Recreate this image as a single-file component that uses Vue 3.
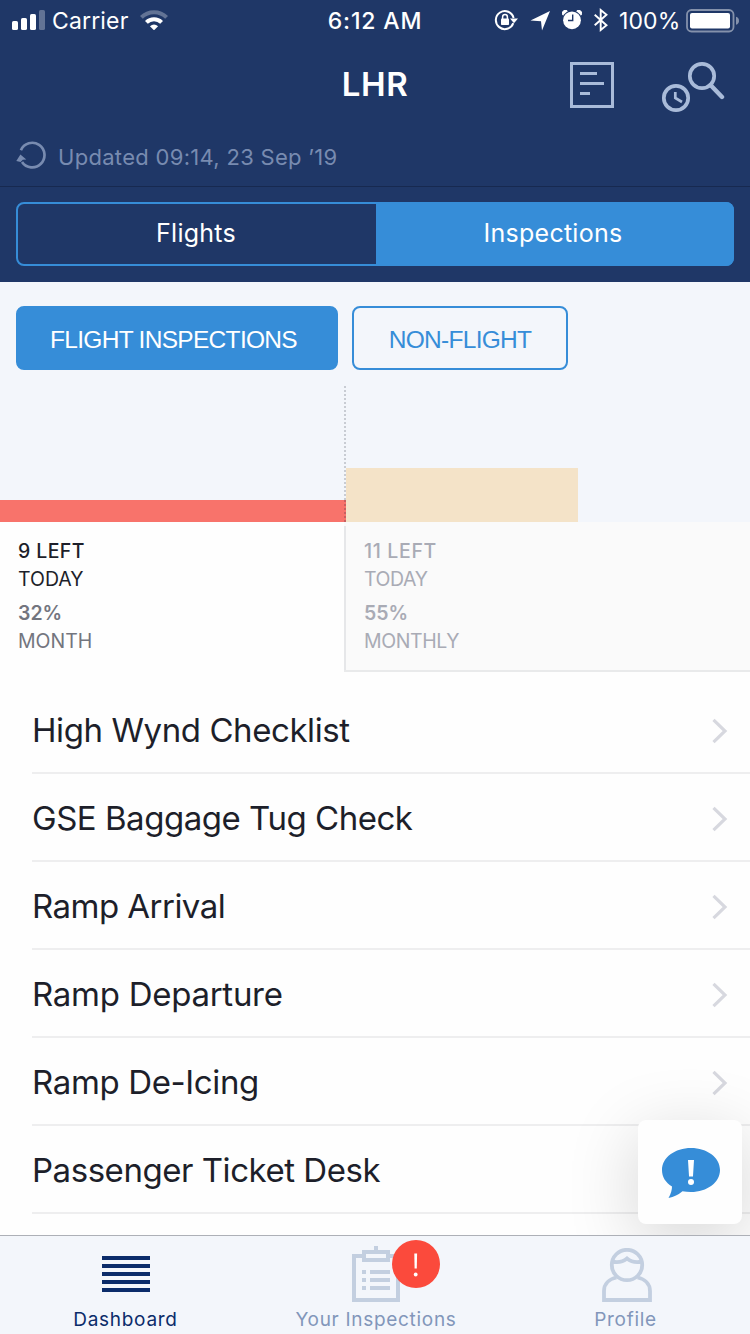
<script setup>
const checklists = [
  { name: 'High Wynd Checklist', tracking: -0.42 },
  { name: 'GSE Baggage Tug Check', tracking: -0.48 },
  { name: 'Ramp Arrival', tracking: -0.53 },
  { name: 'Ramp Departure', tracking: -0.27 },
  { name: 'Ramp De-Icing', tracking: -0.36 },
  { name: 'Passenger Ticket Desk', tracking: -0.46 },
]
</script>

<template>
  <div class="screen">
    <header class="header">
      <div class="status">
        <div class="status-left">
          <svg class="signal" width="33" height="20" viewBox="12 10 33 20" fill="#fff">
            <rect x="12" y="21" width="6" height="9" rx="1.6" />
            <rect x="21" y="18" width="6" height="12" rx="1.6" />
            <rect x="30" y="14" width="6" height="16" rx="1.6" />
            <rect x="39" y="10" width="6" height="20" rx="1.6" opacity=".3" />
          </svg>
          <span class="carrier">Carrier</span>
          <svg class="wifi" width="28" height="20" viewBox="141 10 28 20" fill="none" stroke="#fff">
            <path d="M142.4 17.4A17.8 17.8 0 0 1 167.6 17.4" stroke-width="4" opacity=".3" />
            <path d="M147.4 22.3A10.8 10.8 0 0 1 162.6 22.3" stroke-width="4" />
            <path d="M150.9 26.2Q155 22.7 159.1 26.2L155 30.3Z" fill="#fff" stroke="none" />
          </svg>
        </div>
        <span class="time">6:12 AM</span>
        <div class="status-right">
          <svg width="24" height="22" viewBox="494 9 24 22" fill="none">
            <path d="M513.3 23.2A9 9 0 1 1 513.6 18" stroke="#fff" stroke-width="2" />
            <path d="M510 18.4H518L514 23.2Z" fill="#fff" />
            <rect x="501" y="18.5" width="8" height="6.5" rx=".8" fill="#fff" />
            <path d="M502.6 19V17a2.4 2.4 0 0 1 4.8 0v2" stroke="#fff" stroke-width="1.5" />
          </svg>
          <svg class="arrow" width="20" height="20" viewBox="530 11 20 20" fill="#fff">
            <path d="M550 11L542 30.5L541 21.2L530.5 20.5Z" />
          </svg>
          <svg class="alarm" width="20" height="20" viewBox="562.5 10 20 20">
            <circle cx="572.5" cy="20.3" r="8.9" fill="#fff" />
            <path d="M563.6 15.3A3 3 0 0 1 568 11.2M577 11.2A3 3 0 0 1 581.4 15.3" fill="#fff" stroke="#fff" />
            <path d="M573.2 14.5V20.5H568.5" fill="none" stroke="#1f3767" stroke-width="1.4" />
          </svg>
          <svg class="bluetooth" width="14" height="24" viewBox="594 8 14 24" fill="none" stroke="#fff" stroke-width="1.9">
            <path d="M594.7 14.8L606.5 25.3L600.7 30V10L606.5 14.8L594.7 25.3" />
          </svg>
          <span class="percent">100%</span>
          <svg class="battery" width="53" height="24" viewBox="686 9 53 24">
            <rect x="687" y="10" width="46.5" height="21.5" rx="4.5" fill="none" stroke="#fff" stroke-opacity=".45" stroke-width="1.8" />
            <rect x="690" y="13" width="40" height="15.5" rx="2" fill="#fff" />
            <path d="M736 16.7Q739 17.5 739 20.7T736 24.7Z" fill="#fff" opacity=".45" />
          </svg>
        </div>
      </div>

      <div class="navbar">
        <h1 class="title">LHR</h1>
        <div class="actions">
          <svg width="44" height="46" viewBox="570 62 44 46" fill="none" stroke="#a9bbd9" stroke-width="3">
            <rect x="571.5" y="63.5" width="41" height="43" />
            <path d="M580 73.500H597M580 83.500H604M580 93.500H590" />
          </svg>
          <svg class="search" width="64" height="52" viewBox="661 61 64 52" fill="none" stroke="#a9bbd9">
            <circle cx="702" cy="76" r="12.2" stroke-width="3.7" />
            <path d="M710.5 85L722 97" stroke-width="4.4" stroke-linecap="round" />
            <circle cx="676" cy="98" r="12.2" stroke-width="3.7" />
            <path d="M675.3 92V98L682 102" stroke-width="2.7" />
          </svg>
        </div>
      </div>

      <div class="updated">
        <svg width="31" height="28" viewBox="16 141 31 28">
          <path d="M20.9 150.2A12.3 12.3 0 1 1 22 162" fill="none" stroke="#788bb0" stroke-width="2.7" />
          <path d="M16.3 161L20.4 154.6L26.3 159.6L22.8 159.8L20.6 162Z" fill="#788bb0" />
        </svg>
        <span>Updated 09:14, 23 Sep ’19</span>
      </div>

      <div class="segment-area">
        <div class="segments">
          <div class="segment">Flights</div>
          <div class="segment selected">Inspections</div>
        </div>
      </div>
    </header>

    <main class="content">
      <div class="filters">
        <button class="filter active">FLIGHT INSPECTIONS</button>
        <button class="filter outline">NON-FLIGHT</button>
      </div>

      <section class="chart">
        <div class="bar today-bar"></div>
        <div class="bar month-bar"></div>
      </section>

      <section class="stats">
        <div class="stat current">
          <strong>9 LEFT</strong>
          <span>TODAY</span>
          <strong class="sub">32%</strong>
          <span class="sub-label">MONTH</span>
        </div>
        <div class="stat upcoming">
          <strong>11 LEFT</strong>
          <span>TODAY</span>
          <strong class="sub">55%</strong>
          <span class="sub-label">MONTHLY</span>
        </div>
      </section>

      <ul class="list">
        <li v-for="item in checklists" :key="item.name" class="row">
          <span :style="{ letterSpacing: item.tracking + 'px' }">{{ item.name }}</span>
          <svg width="18" height="28" viewBox="0 0 18 28" fill="none" stroke="#d7d8df" stroke-width="3.2">
            <path d="M2.5 2.8L14 14L2.5 25.2" />
          </svg>
        </li>
      </ul>
    </main>

    <div class="feedback">
      <svg width="58" height="50" viewBox="662 1148 58 50">
        <path d="M691 1148C707 1148 720 1157.5 720 1170S707 1192 691 1192Q686.5 1192 682.5 1191.3Q676.5 1196.500 668.5 1198Q672 1192 672 1186.5C665.5 1182.5 662 1177 662 1170C662 1157.5 675 1148 691 1148Z" fill="#368dd8" />
        <path d="M688 1160H694L693 1176.5H689Z" fill="#fff" />
        <circle cx="691" cy="1182" r="3" fill="#fff" />
      </svg>
    </div>

    <nav class="tabs">
      <div class="tab current-tab">
        <svg width="48" height="54" viewBox="102 1248 48 54" fill="#0b2c6a">
          <path d="M102 1256h48v4h-48zM102 1264h48v4h-48zM102 1272h48v4h-48zM102 1280h48v4h-48zM102 1288h48v4h-48z" />
        </svg>
        <span>Dashboard</span>
      </div>
      <div class="tab inspections-tab">
        <div class="tab-icon">
          <svg width="48" height="56" viewBox="352 1246 48 56" fill="none" stroke="#c3cfe0" stroke-width="4">
            <path d="M362 1256H354V1300H398V1256H390" />
            <rect x="364" y="1252" width="24" height="8" />
            <path d="M376 1246V1252M362 1272H366M370 1272H390M362 1280H366M370 1280H390M362 1288H366M370 1288H390" />
          </svg>
          <svg class="alert" width="48" height="48" viewBox="0 0 48 48">
            <circle cx="24" cy="24" r="24" fill="#fb4a3c" />
            <path d="M22.3 13.500H25.1L24.8 28.500H22.6Z" fill="#fff" />
            <circle cx="23.7" cy="34.5" r="1.9" fill="#fff" />
          </svg>
        </div>
        <span>Your Inspections</span>
      </div>
      <div class="tab profile-tab">
        <svg class="profile" width="50" height="54" viewBox="602 1248 50 54" fill="none" stroke="#c3cfe0" stroke-width="3.8">
          <circle cx="627" cy="1265" r="15.2" />
          <path d="M612.5 1261.7Q621 1263.5 627 1258.5Q633 1263.5 641.5 1261.7" />
          <path d="M616.5 1277.500C609 1279 604 1284 604 1291V1300H650V1291C650 1284 645 1279 637.5 1277.5" />
        </svg>
        <span>Profile</span>
      </div>
    </nav>
  </div>
</template>

<style>
body {
  margin: 0;
}
</style>

<style scoped>
.screen {
  position: relative;
  display: flex;
  flex-direction: column;
  box-sizing: border-box;
  width: 750px;
  height: 1334px;
  overflow: hidden;
  background: #fefefe;
  font-family: Inter, "Liberation Sans", sans-serif;
  color: #1d1f2a;
}
svg {
  display: block;
  flex: none;
}
.header {
  height: 282px;
  flex: none;
  background: #1f3767;
  color: #fff;
}
.status {
  display: grid;
  grid-template-columns: 1fr auto 1fr;
  align-items: center;
  height: 40px;
  font-size: 23px;
  line-height: 38px;
  white-space: nowrap;
}
.status-left {
  display: flex;
  align-items: center;
  padding-left: 12px;
}
.carrier {
  width: 80px;
  margin: 2px 8px 0 7px;
  letter-spacing: 0.15px;
}
.time {
  margin-top: 2px;
  font-weight: 500;
  letter-spacing: 0.85px;
}
.status-right {
  display: flex;
  align-items: center;
  justify-content: flex-end;
  padding-right: 11px;
}
.arrow {
  margin: 2px 12px 0 12px;
}
.bluetooth {
  margin: 0 11px 0 12px;
}
.percent {
  width: 61px;
  margin-top: 2px;
  margin-right: 6px;
  letter-spacing: 0.1px;
}
.battery {
  margin-top: 2px;
}
.navbar {
  display: grid;
  grid-template-columns: 1fr auto 1fr;
  align-items: center;
  height: 88px;
}
.title {
  grid-column: 2;
  margin: 0;
  font-size: 33px;
  line-height: 40px;
  font-weight: 600;
  letter-spacing: 0.6px;
}
.actions {
  display: flex;
  justify-content: flex-end;
  align-items: center;
  gap: 47px;
  padding: 2px 25px 0 0;
}
.search {
  margin-top: 4px;
}
.updated {
  display: flex;
  gap: 11px;
  align-items: center;
  box-sizing: border-box;
  height: 59px;
  padding: 0 0 4px 16px;
  border-bottom: 1px solid #172950;
  color: #788bb0;
  font-size: 22px;
  letter-spacing: 0.3px;
}
.updated span {
  padding-top: 3px;
}
.segment-area {
  padding: 15px 16px 16px;
}
.segments {
  display: grid;
  grid-template-columns: 358px 1fr;
  box-sizing: border-box;
  height: 64px;
  border: 2px solid #368dd8;
  border-radius: 8px;
  font-size: 25px;
  line-height: 59px;
  text-align: center;
  letter-spacing: 0.25px;
}
.segment {
  padding-right: 2px;
}
.selected {
  margin: -2px -2px -2px 0;
  padding: 2px 4px 0 0;
  border-radius: 0 8px 8px 0;
  background: #368dd8;
}
.content {
  flex: 1;
}
.filters {
  display: flex;
  gap: 14px;
  height: 64px;
  padding: 24px 16px 16px;
  background: #f3f6fb;
}
.filter {
  box-sizing: border-box;
  padding: 3px 0 0;
  border: 2px solid #368dd8;
  border-radius: 8px;
  font-family: "Liberation Sans", sans-serif;
  font-size: 24.5px;
  letter-spacing: -0.7px;
}
.active {
  width: 322px;
  padding-right: 7px;
  background: #368dd8;
  color: #fff;
}
.outline {
  width: 216px;
  background: #f3f6fb;
  color: #368dd8;
}
.chart {
  display: flex;
  align-items: flex-end;
  height: 136px;
  background: repeating-linear-gradient(#c8ccd3 0 2px, transparent 2px 4px) 344px 0 / 2px 100% no-repeat #f3f6fb;
}
.today-bar {
  width: 346px;
  height: 22px;
  background: repeating-linear-gradient(#c95f60 0 2px, transparent 2px 4px) right / 2px 100% no-repeat #f8736b;
}
.month-bar {
  width: 232px;
  height: 54px;
  background: #f4e3c8;
}
.stats {
  display: flex;
  height: 150px;
}
.stat {
  display: flex;
  flex-direction: column;
  box-sizing: border-box;
  padding: 15px 18px 0;
  font-size: 19.5px;
  line-height: 28px;
}
.stat strong {
  font-weight: 500;
  letter-spacing: 0.4px;
}
.stat span {
  letter-spacing: 0;
}
.stat .sub {
  margin-top: 6px;
  font-weight: 600;
  letter-spacing: 0;
}
.current {
  width: 344px;
}
.current .sub,
.current .sub-label {
  color: #73757e;
}
.upcoming {
  flex: 1;
  background: linear-gradient(#e6e7e9, #e6e7e9) 0 4px / 2px 100% no-repeat #fafafa;
  border-bottom: 2px solid #e9eaeb;
  padding-left: 20px;
  color: #a9abb5;
}
.upcoming strong {
  letter-spacing: 0.65px;
}
.upcoming span {
  letter-spacing: -0.4px;
}
.list {
  list-style: none;
  margin: 14px 0 0;
  padding: 0 0 0 32px;
}
.row {
  display: flex;
  align-items: center;
  justify-content: space-between;
  box-sizing: border-box;
  height: 88px;
  padding: 4px 21px 0 0;
  border-bottom: 2px solid #eeeeef;
  font-size: 33px;
  line-height: 40px;
}
.row span {
  padding-bottom: 2px;
}
.feedback {
  position: absolute;
  left: 638px;
  top: 1120px;
  display: flex;
  align-items: center;
  justify-content: center;
  box-sizing: border-box;
  width: 104px;
  height: 104px;
  padding: 2px 0 0 2px;
  border-radius: 8px;
  background: #fefefe;
  box-shadow: 0 16px 70px rgba(0, 0, 0, 0.17);
}
.tabs {
  position: relative;
  display: grid;
  grid-template-columns: 251px 250px 249px;
  flex: none;
  box-sizing: border-box;
  height: 99px;
  border-top: 1px solid #adb0b7;
  background: #f3f6fb;
  color: #8296ba;
  font-size: 19px;
  line-height: 24px;
  letter-spacing: 0.7px;
}
.tab {
  display: flex;
  flex-direction: column;
  align-items: center;
  justify-content: flex-end;
  gap: 6px;
  padding-bottom: 2px;
}
.current-tab {
  color: #0b2c6a;
}
.tab-icon {
  position: relative;
}
.alert {
  position: absolute;
  left: 40px;
  top: -6px;
}
.profile {
  margin-left: 3px;
}
</style>
